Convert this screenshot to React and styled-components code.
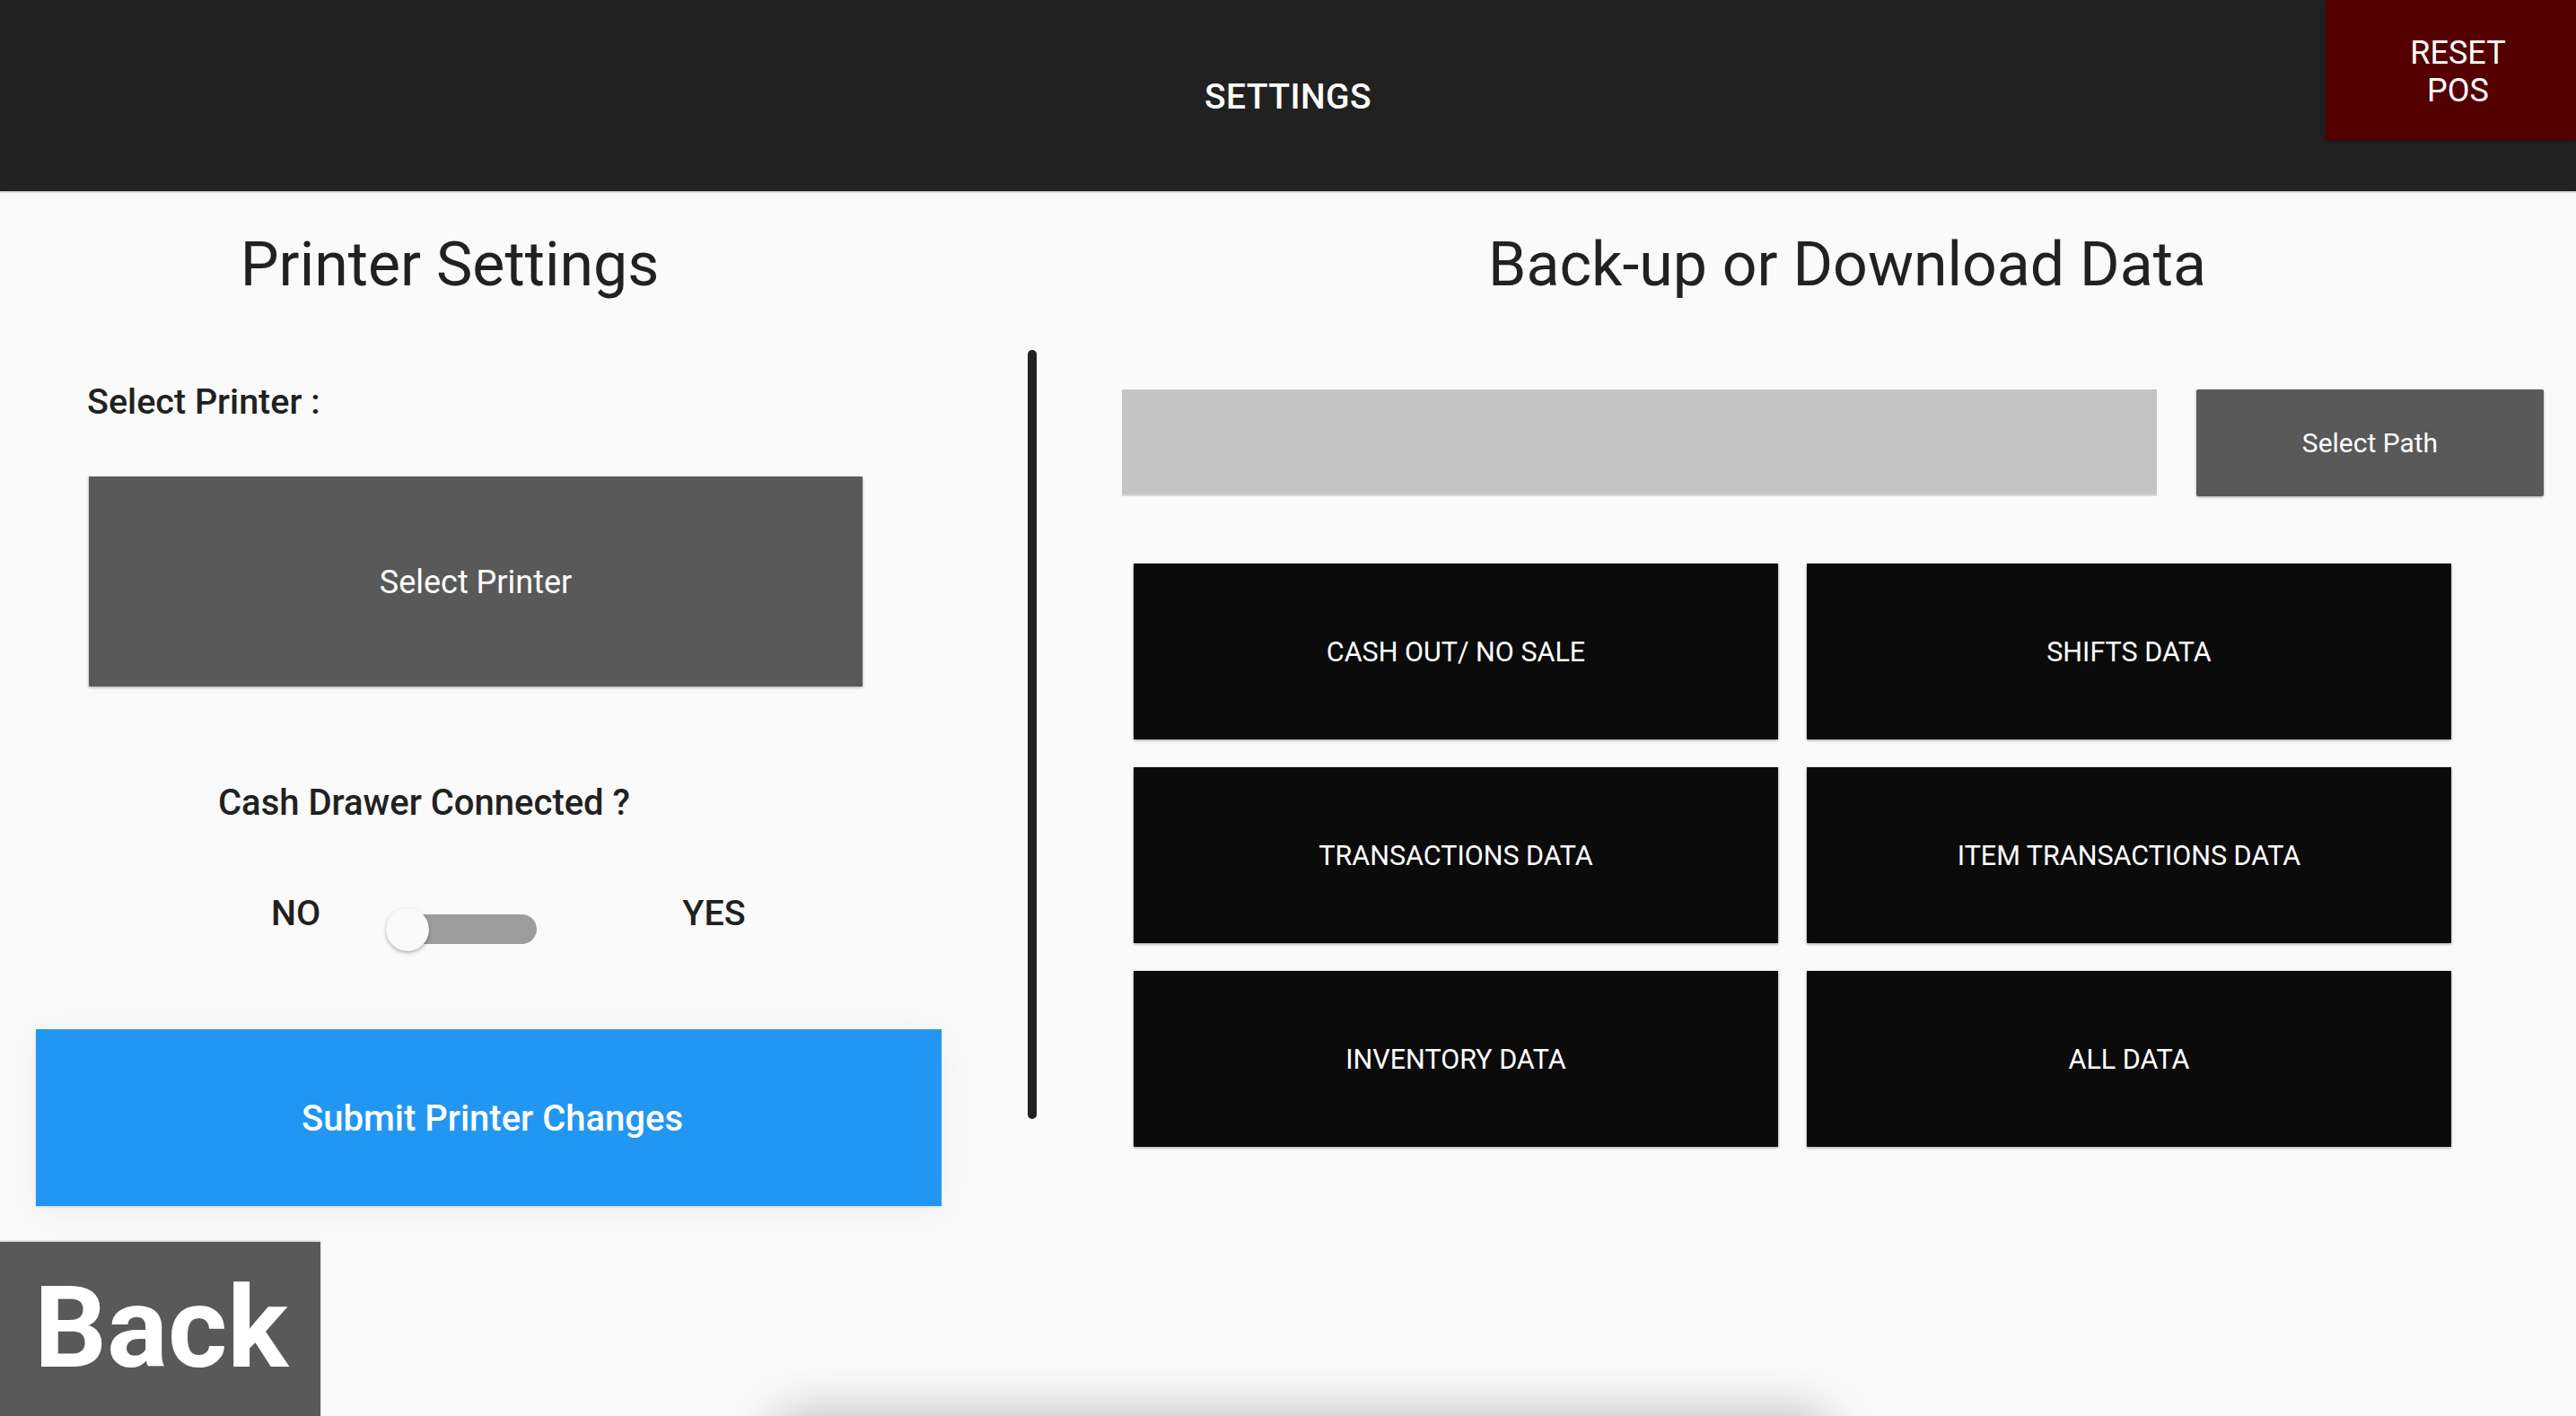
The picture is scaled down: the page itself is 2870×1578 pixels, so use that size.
import React, { useState } from 'react';
import styled, { createGlobalStyle } from 'styled-components';

const GlobalStyle = createGlobalStyle`
  html, body {
    margin: 0;
    padding: 0;
    background: #fafafa;
    font-family: Roboto, "Liberation Sans", Arial, sans-serif;
    overflow: hidden;
  }
  * { box-sizing: border-box; }
`;

const dataButtons = [
  'CASH OUT/ NO SALE',
  'SHIFTS DATA',
  'TRANSACTIONS DATA',
  'ITEM TRANSACTIONS DATA',
  'INVENTORY DATA',
  'ALL DATA',
];

const App = () => {
  const [drawerOn, setDrawerOn] = useState(false);

  return (
    <Page>
      <GlobalStyle />
      <Header>
        <span />
        <HeaderTitle>SETTINGS</HeaderTitle>
        <ResetButton>RESET<br />POS</ResetButton>
      </Header>

      <Body>
        <LeftPane>
          <PaneTitle $width="1002px">Printer Settings</PaneTitle>
          <FieldLabel>Select Printer :</FieldLabel>
          <SelectPrinterButton>Select Printer</SelectPrinterButton>
          <DrawerLabel>Cash Drawer Connected ?</DrawerLabel>

          <ToggleRow>
            <ToggleText>NO</ToggleText>
            <Switch $on={drawerOn} onClick={() => setDrawerOn(!drawerOn)}>
              <Track />
              <Thumb $on={drawerOn} />
            </Switch>
            <ToggleText $gap="162px">YES</ToggleText>
          </ToggleRow>

          <SubmitButton>Submit Printer Changes</SubmitButton>
          <BackButton>Back</BackButton>
        </LeftPane>

        <ScrollThumb />

        <RightPane>
          <PaneTitle $shift="32px">Back-up or Download Data</PaneTitle>
          <PathRow>
            <PathField />
            <PathButton>Select Path</PathButton>
          </PathRow>
          <DataGrid>
            {dataButtons.map((label) => (
              <DataButton key={label}>{label}</DataButton>
            ))}
          </DataGrid>
        </RightPane>
      </Body>

      {/* sheet peeking from under the bottom edge */}
      <BottomSheetShadow />
    </Page>
  );
};

// Styled Components
const Page = styled.div`
  width: 100vw;
  height: 100vh;
  display: flex;
  flex-direction: column;
  background: #fafafa;
  position: relative;
  overflow: hidden;
`;

const Header = styled.header`
  height: 213px;
  flex-shrink: 0;
  background: #212121;
  display: grid;
  grid-template-columns: 1fr auto 1fr;
  align-items: center;
  box-shadow: 0 1px 2px rgba(0, 0, 0, 0.3);
  position: relative;
  z-index: 1;
`;

const HeaderTitle = styled.h1`
  margin: 2px 0 0;
  font-size: 39px;
  font-weight: 500;
  color: #ffffff;
  letter-spacing: 0.4px;
`;

const ResetButton = styled.button`
  justify-self: end;
  align-self: start;
  width: 279px;
  height: 156px;
  border: none;
  background: #550000;
  color: #ffffff;
  font-family: inherit;
  font-size: 36px;
  line-height: 42px;
  padding: 4px 0 0 16px;
  box-shadow: 0 2px 4px rgba(0, 0, 0, 0.3);
`;

const Body = styled.main`
  flex: 1;
  display: flex;
  min-height: 0;
`;

const LeftPane = styled.section`
  width: 1145px;
  flex-shrink: 0;
  display: flex;
  flex-direction: column;
  align-items: flex-start;
`;

const PaneTitle = styled.h2`
  margin: 42px 0 0;
  width: ${(p) => p.$width || '100%'};
  padding-left: ${(p) => p.$shift || '0'};
  text-align: center;
  font-size: 68px;
  line-height: 80px;
  font-weight: 400;
  color: #212121;
`;

const FieldLabel = styled.p`
  margin: 90px 0 0 97px;
  font-size: 39.5px;
  line-height: 46px;
  font-weight: 500;
  color: #212121;
`;

const SelectPrinterButton = styled.button`
  margin: 60px 0 0 99px;
  width: 862px;
  height: 234px;
  border: none;
  background: #595959;
  color: #ffffff;
  font-family: inherit;
  font-size: 36px;
  padding-top: 2px;
  box-shadow: 0 1px 3px rgba(0, 0, 0, 0.35);
`;

const DrawerLabel = styled.p`
  margin: 107px 0 0 243px;
  font-size: 40px;
  line-height: 46px;
  font-weight: 500;
  color: #212121;
`;

const ToggleRow = styled.div`
  margin: 77px 0 0 302px;
  display: flex;
  align-items: flex-start;
`;

const ToggleText = styled.span`
  margin-left: ${(p) => p.$gap || '0'};
  font-size: 39.5px;
  line-height: 46px;
  font-weight: 500;
  color: #212121;
`;

const Switch = styled.div`
  position: relative;
  width: 168px;
  height: 48px;
  margin: 17px 0 0 73px;
  cursor: pointer;
`;

const Track = styled.div`
  position: absolute;
  left: 4px;
  right: 0;
  top: 7px;
  height: 33px;
  border-radius: 17px;
  background: #9c9c9c;
`;

const Thumb = styled.div`
  position: absolute;
  top: 0;
  left: ${(p) => (p.$on ? '120px' : '0')};
  width: 48px;
  height: 48px;
  border-radius: 50%;
  background: #fafafa;
  box-shadow: 0 2px 4px rgba(0, 0, 0, 0.25), 0 1px 1px rgba(0, 0, 0, 0.1);
`;

const SubmitButton = styled.button`
  margin: 87px 0 0 40px;
  width: 1009px;
  height: 197px;
  border: none;
  background: #2196f3;
  color: #ffffff;
  font-family: inherit;
  font-size: 40px;
  font-weight: 500;
  padding: 2px 0 0 8px;
  box-shadow: 0 6px 40px rgba(0, 0, 0, 0.06), 0 1px 2px rgba(0, 0, 0, 0.15);
`;

const BackButton = styled.button`
  margin-top: 40px;
  width: 357px;
  height: 194px;
  border: none;
  background: #595959;
  color: #ffffff;
  font-family: inherit;
  font-size: 127px;
  font-weight: 700;
  line-height: 1;
  padding: 0 0 4px 2px;
  box-shadow: 0 -1px 2px rgba(0, 0, 0, 0.25);
`;

const ScrollThumb = styled.div`
  width: 10px;
  height: 857px;
  margin-top: 177px;
  border-radius: 5px;
  background: #212121;
  flex-shrink: 0;
`;

const RightPane = styled.section`
  flex: 1;
  display: flex;
  flex-direction: column;
  padding: 0 36px 0 95px;
`;

const PathRow = styled.div`
  margin-top: 99px;
  display: flex;
  gap: 44px;
  height: 119px;
`;

const PathField = styled.div`
  flex: 1;
  background: #c4c4c4;
  border-bottom: 2px solid #d9d9d9;
`;

const PathButton = styled.button`
  width: 387px;
  border: none;
  background: #595959;
  color: #ffffff;
  font-family: inherit;
  font-size: 30px;
  border-radius: 2px;
  box-shadow: 0 1px 3px rgba(0, 0, 0, 0.35);
`;

const DataGrid = styled.div`
  margin: 75px 0 0 13px;
  display: grid;
  grid-template-columns: 718px 718px;
  grid-auto-rows: 196px;
  column-gap: 32px;
  row-gap: 31px;
`;

const DataButton = styled.button`
  border: none;
  background: #0b0b0b;
  color: #ffffff;
  font-family: inherit;
  font-size: 30.5px;
  padding-top: 2px;
  box-shadow: 0 1px 3px rgba(0, 0, 0, 0.4);
`;

const BottomSheetShadow = styled.div`
  position: absolute;
  left: 860px;
  width: 1180px;
  top: 100%;
  height: 200px;
  border-radius: 30px;
  background: #fafafa;
  box-shadow: 0 0 60px rgba(0, 0, 0, 0.28);
`;

export default App;
